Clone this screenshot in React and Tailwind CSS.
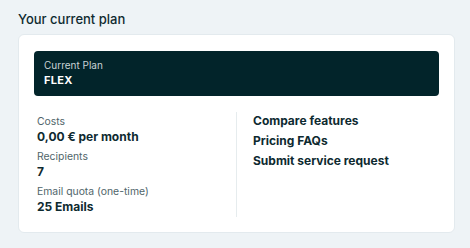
import React from 'react'

const stats = [
  { label: 'Costs', value: '0,00 € per month' },
  { label: 'Recipients', value: '7' },
  { label: 'Email quota (one-time)', value: '25 Emails' },
]

const links = ['Compare features', 'Pricing FAQs', 'Submit service request']

export default function App() {
  return (
    <div className="w-[470px] h-[248px] bg-[#eef3f6] px-[18px] pt-[10px] font-['Inter',sans-serif] text-[#0e2a30]">
      <h2 className="text-[13px] leading-[18px] font-medium mb-[6px]">Your current plan</h2>

      <div className="w-[437px] h-[199px] bg-white rounded-[6px] border border-[#e3eaee] px-[15px] pt-[16px]">
        {/* plan banner */}
        <div className="h-[45px] bg-[#02242a] rounded-[4px] px-[10px] pt-[8px] text-white">
          <div className="text-[10px] leading-[13px] text-[#c9d3d5]">Current Plan</div>
          <div className="text-[11px] leading-[16px] font-bold tracking-wide">FLEX</div>
        </div>

        <div className="flex mt-[16px]">
          <div className="w-[202px] pl-[3px] pt-[2px] flex flex-col gap-[4px] pb-[2px]">
            {stats.map(s => (
              <div key={s.label}>
                <div className="text-[10.4px] leading-[15px] text-[#50656a]">{s.label}</div>
                <div className="text-[12px] leading-[16px] font-bold">{s.value}</div>
              </div>
            ))}
          </div>
          <div className="w-px bg-[#e6ecee]" />
          <div className="pl-[16px] flex flex-col gap-[4px] pt-[1px]">
            {links.map(l => (
              <a key={l} className="text-[12px] leading-[16px] font-bold cursor-pointer">{l}</a>
            ))}
          </div>
        </div>
      </div>
    </div>
  )
}
